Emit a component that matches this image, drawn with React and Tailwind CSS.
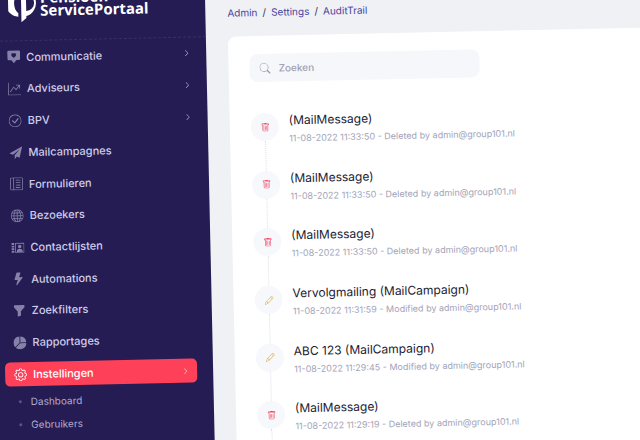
import React from 'react';
import {
    BsChatSquareHeartFill,
    BsGraphUpArrow,
    BsCheckCircle,
    BsLayoutTextSidebarReverse,
    BsGlobe,
    BsLightningFill,
    BsFunnelFill,
    BsPieChartFill,
    BsGear,
    BsChevronRight,
    BsSearch,
    BsTrash,
    BsPencil,
} from 'react-icons/bs';

const PlaneIcon = ({ className }) => (
    <svg viewBox="0 0 16 16" className={className} fill="currentColor">
        <path d="M16 0 0 8.500l4.500 1.800L12.500 4 6.500 11v5l2.600-3.600 3.400 1.600z" />
    </svg>
);

const ContactIcon = ({ className }) => (
    <svg viewBox="0 0 16 16" className={className} fill="currentColor">
        <path d="M0 2h3.500v2.500H0zM0 5.500h3.500v2H0zM0 8.500h3.500v2H0zM0 11.500h3.500V14H0z" />
        <path fillRule="evenodd" d="M4.500 2H16v12H4.500zm1 1v10H15V3z" />
        <circle cx="10.250" cy="6.500" r="2.200" />
        <path d="M6.500 13c0-2.500 1.500-3.700 3.750-3.700S14 10.500 14 13z" />
    </svg>
);

const menu = [
    { label: 'Communicatie', icon: BsChatSquareHeartFill, expandable: true },
    { label: 'Adviseurs', icon: BsGraphUpArrow, expandable: true },
    { label: 'BPV', icon: BsCheckCircle, expandable: true },
    { label: 'Mailcampagnes', icon: PlaneIcon },
    { label: 'Formulieren', icon: BsLayoutTextSidebarReverse },
    { label: 'Bezoekers', icon: BsGlobe },
    { label: 'Contactlijsten', icon: ContactIcon },
    { label: 'Automations', icon: BsLightningFill },
    { label: 'Zoekfilters', icon: BsFunnelFill },
    { label: 'Rapportages', icon: BsPieChartFill },
    { label: 'Instellingen', icon: BsGear, expandable: true, active: true },
];

const subMenu = ['Dashboard', 'Gebruikers'];

const entries = [
    { title: '(MailMessage)', time: '11-08-2022 11:33:50', action: 'Deleted' },
    { title: '(MailMessage)', time: '11-08-2022 11:33:50', action: 'Deleted' },
    { title: '(MailMessage)', time: '11-08-2022 11:33:50', action: 'Deleted' },
    { title: 'Vervolgmailing (MailCampaign)', time: '11-08-2022 11:31:59', action: 'Modified' },
    { title: 'ABC 123 (MailCampaign)', time: '11-08-2022 11:29:45', action: 'Modified' },
    { title: '(MailMessage)', time: '11-08-2022 11:29:19', action: 'Deleted' },
];

const Logo = () => (
    <div className="flex h-[42px] items-start border-b border-dashed border-[#393163] pl-6">
        <svg viewBox="0 0 28 39" className="-mt-4 h-[39px] w-7 shrink-0" fill="#fff">
            <path d="M12 6.500A13.500 13.500 0 0 0 10 33.500V30Q6 27 6 20T12 11z" />
            <path d="M13 6.500h1a13.500 13.500 0 0 1 4 26.500v2l-5 4V13.500h5V28a8 8 0 0 0 0-16h-5z" />
        </svg>
        <div className="-mt-2 pl-1 font-['Open_Sans',sans-serif] text-[15px] leading-[13px] font-bold text-white">
            <div>Pensioen</div>
            <div>ServicePortaal</div>
        </div>
    </div>
);

const MenuItem = ({ label, icon: Icon, expandable, active }) => (
    <li className="flex items-center pl-[13px]">
        <a
            href="#"
            className={
                active
                    ? 'mr-4 flex h-6 flex-1 items-center rounded-[5px] bg-[#ff4059] pr-2 pl-[9px] text-white'
                    : 'flex h-6 flex-1 items-center pr-4 pl-[9px] text-[#cfcdea]'
            }
        >
            <Icon className={active ? 'h-[13px] w-[13px]' : 'h-[13px] w-[13px] text-[#8581a8]'} />
            <span className="flex-1 pl-1.5 text-[11px] font-medium">{label}</span>
            {expandable && <BsChevronRight className="h-[7px] w-[7px]" />}
        </a>
    </li>
);

const Sidebar = () => (
    <aside className="w-[221px] shrink-0 bg-[#241c52]">
        <Logo />
        <ul className="grid h-[349px] auto-rows-fr">
            {menu.map((item) => (
                <MenuItem key={item.label} {...item} />
            ))}
        </ul>
        <ul>
            {subMenu.map((label) => (
                <li key={label} className="flex h-[23px] items-center pl-[26px]">
                    <span className="h-[3px] w-[3px] rounded-full bg-[#5a5585]" />
                    <a href="#" className="pl-[9px] text-[10px] text-[#aeabcf]">{label}</a>
                </li>
            ))}
        </ul>
    </aside>
);

const Entry = ({ title, time, action }) => (
    <li className="flex">
        <div className="flex w-7 flex-col items-center">
            <div className="flex h-7 w-7 items-center justify-center rounded-full bg-[#f6f8fc]">
                {action === 'Deleted' ? (
                    <BsTrash className="h-[9px] w-[9px] text-[#f0405f]" />
                ) : (
                    <BsPencil className="h-[9px] w-[9px] text-[#e0b860]" />
                )}
            </div>
            <div className="flex-1 border-l border-dotted border-[#dfe0ea]" />
        </div>
        <div className="pl-[10px]">
            <h3 className="text-xs leading-4 text-[#1b1b33]">{title}</h3>
            <p className="text-[9px] leading-5 text-[#a3a4b8]">
                {time} - {action} by admin@group101.nl
            </p>
        </div>
    </li>
);

const App = () => {
    return (
        <div className="h-screen overflow-hidden bg-[#eff1f5] font-['Inter',sans-serif]">
            <div className="-ml-4 flex min-h-[calc(100vh+32px)] w-[calc(100%+32px)] origin-top-left -rotate-[1.25deg]">
                <Sidebar />
                <main className="flex flex-1 flex-col pl-[22px]">
                    <nav className="flex h-[42px] gap-[5px] pt-[10px] text-[10px] leading-4 text-[#4a449f]">
                        <a href="#">Admin</a>
                        <span className="text-[#33334d]">/</span>
                        <a href="#">Settings</a>
                        <span className="text-[#33334d]">/</span>
                        <a href="#">AuditTrail</a>
                    </nav>
                    <section className="flex-1 rounded-tl-lg bg-white pt-[18px] pl-[21px]">
                        <label className="flex h-7 w-[230px] items-center gap-2 rounded-lg bg-[#f6f7fb] px-[10px]">
                            <BsSearch className="h-[11px] w-[11px] text-[#9a9bb0]" />
                            <input
                                type="text"
                                placeholder="Zoeken"
                                aria-label="Zoeken"
                                className="min-w-0 flex-1 text-[10px] font-medium outline-none placeholder:text-[#9f9fb2]"
                            />
                        </label>
                        <ul className="mt-[31px] grid h-[346px] auto-rows-fr">
                            {entries.map((entry, i) => (
                                <Entry key={i} {...entry} />
                            ))}
                        </ul>
                    </section>
                </main>
            </div>
        </div>
    );
};

export default App;
